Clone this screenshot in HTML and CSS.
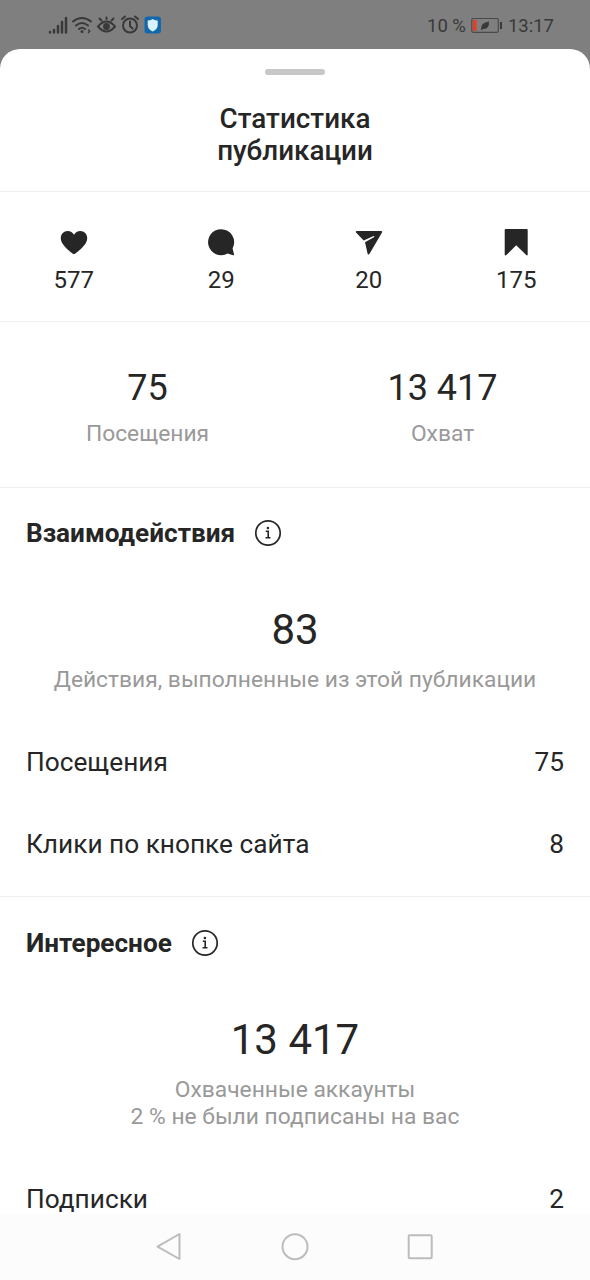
FILE: index.html
```html
<!DOCTYPE html>
<html lang="ru">
<head>
<meta charset="utf-8">
<title>Статистика публикации</title>
<link rel="stylesheet" href="styles.css">
</head>
<body>
<div class="screen">
  <header class="status">
    <svg class="status-icons" width="116" height="22" viewBox="0 0 116 22" fill="none" stroke="#393939" stroke-width="2" stroke-linecap="round">
      <path d="M2 18v.5M6 16v2.500M10 12v6.500M14 8v10.500M18 4v14.500" stroke-width="2.500"/>
      <path d="M25 7.500q9-7 18 0M28 11.500q6-5 12 0M31 15q3-2.500 6 0"/>
      <circle cx="34" cy="17.500" r="1.500" fill="#393939" stroke="none"/>
      <path d="M40.500 16l1.200 1-1.200 1.500" stroke-width="1.500"/>
      <path d="M50 12.500q8.500-10 17 0q-8.500 10-17 0zM58.500 5V3.500M53.500 6.500L51.500 4.500M63.500 6.500L65.500 4.500"/>
      <circle cx="58.500" cy="12.500" r="3.400" fill="#393939" stroke="none"/>
      <circle cx="82" cy="11.500" r="7"/>
      <path d="M82 7.500v4.500l2.500 2.500M74 5l3-2.500M90 5l-3-2.500"/>
      <rect x="96.500" y="2.500" width="16.500" height="17" rx="3" fill="#1268ac" stroke="none"/>
      <path d="M104.700 5q2.500 1.500 5 1.500v4.500q0 4-5 6.500q-5-2.500-5-6.500v-4.500q2.500 0 5-1.500z" fill="#d8f1fc" stroke="none"/>
    </svg>
    <div class="status-right">
      <span>10 %</span>
      <svg class="battery" width="32" height="16" viewBox="0 0 32 16">
        <rect x=".8" y=".5" width="26.500" height="13.800" rx="1.500" fill="none" stroke="#4a4a4a" stroke-width="1.200"/>
        <rect x="2" y="2" width="3.500" height="11" fill="#e63d26"/>
        <path d="M10 11.500q-.5-7 8-8q.5 8-6.200 7.500l-1.200 1.200z" fill="#393939"/>
        <path d="M30 4v7" stroke="#393939" stroke-width="2"/>
      </svg>
      <span>13:17</span>
    </div>
  </header>

  <main class="sheet">
    <div class="sheet-head">
      <div class="handle"></div>
      <h1>Статистика<br>публикации</h1>
    </div>

    <section class="reactions">
      <div class="reaction">
        <svg width="28" height="28" viewBox="0 0 28 28" fill="#262626"><path d="M14 26.200C12.500 25.500 .8 17.500 .8 10.200C.8 6 3.800 3.100 7.600 3.100C10.600 3.100 12.700 4.700 14 6.700C15.300 4.700 17.400 3.100 20.400 3.100C24.200 3.100 27.200 6 27.200 10.200C27.200 17.500 15.500 25.500 14 26.200z"/></svg>
        <span>577</span>
      </div>
      <div class="reaction">
        <svg width="28" height="28" viewBox="0 0 28 28" fill="#262626"><path d="M14 1.200A13 13 0 1 0 20.500 25.500L26.200 27.300Q27.300 27.400 27 26.300L25.600 20.400A13 13 0 0 0 14 1.200z"/></svg>
        <span>29</span>
      </div>
      <div class="reaction">
        <svg width="28" height="28" viewBox="0 0 28 28" fill="#262626"><path d="M1.500 3H26.200Q27.800 3.200 27 4.600L14.400 25.900Q13.300 27.200 12.600 25.700L10 14.300L19.300 8.900Q19.500 8.100 18.600 8.100L8.700 12.600L1 4.600Q.3 3.500 1.500 3z"/></svg>
        <span>20</span>
      </div>
      <div class="reaction">
        <svg width="28" height="28" viewBox="0 0 28 28" fill="#262626"><path d="M3.700 1H24.700Q25.700 1 25.700 2V26.400Q25.500 28 24.200 27L14.200 17.300L4.400 27Q2.800 28 2.700 26.400V2Q2.700 1 3.700 1z"/></svg>
        <span>175</span>
      </div>
    </section>

    <section class="summary">
      <div><div class="summary-value">75</div><div class="caption">Посещения</div></div>
      <div><div class="summary-value">13 417</div><div class="caption">Охват</div></div>
    </section>

    <section class="block interactions">
      <div class="block-title">
        <h2>Взаимодействия</h2>
        <svg width="28" height="28" viewBox="0 0 28 28" fill="none" stroke="#262626"><circle cx="14" cy="14" r="12.200" stroke-width="1.700"/><path d="M11.800 12.200h2.400v6.300M11.500 18.700h5" stroke-width="1.600"/><circle cx="13.900" cy="9" r="1.300" fill="#262626" stroke="none"/></svg>
      </div>
      <div class="big">83</div>
      <div class="caption">Действия, выполненные из этой публикации</div>
      <div class="rows">
        <div class="row"><span>Посещения</span><span>75</span></div>
        <div class="row"><span>Клики по кнопке сайта</span><span>8</span></div>
      </div>
    </section>

    <section class="block discovery">
      <div class="block-title">
        <h2>Интересное</h2>
        <svg width="28" height="28" viewBox="0 0 28 28" fill="none" stroke="#262626"><circle cx="14" cy="14" r="12.200" stroke-width="1.700"/><path d="M11.800 12.200h2.400v6.300M11.500 18.700h5" stroke-width="1.600"/><circle cx="13.900" cy="9" r="1.300" fill="#262626" stroke="none"/></svg>
      </div>
      <div class="big">13 417</div>
      <div class="caption">Охваченные аккаунты<br>2 % не были подписаны на вас</div>
      <div class="rows">
        <div class="row"><span>Подписки</span><span>2</span></div>
      </div>
    </section>
  </main>

  <nav class="navbar">
    <svg width="28" height="32" viewBox="0 0 28 32" fill="none" stroke="#bcbcbc" stroke-width="2" stroke-linejoin="round"><path d="M24.500 3V28L2.500 15.700z"/></svg>
    <svg width="28" height="32" viewBox="0 0 28 32" fill="none" stroke="#bcbcbc" stroke-width="2"><circle cx="14" cy="15.700" r="12.500"/></svg>
    <svg width="28" height="32" viewBox="0 0 28 32" fill="none" stroke="#bcbcbc" stroke-width="2"><rect x="1.700" y="4.200" width="23" height="23" rx="1"/></svg>
  </nav>
</div>
</body>
</html>
```
FILE: styles.css
```css
* { box-sizing: border-box; }
body { margin: 0; }
h1, h2 { margin: 0; }
svg { display: block; flex: none; }

.screen {
  width: 590px;
  height: 1280px;
  display: flex;
  flex-direction: column;
  overflow: hidden;
  background: #7f7f7f;
  color: #262626;
  font-family: Roboto, "Noto Sans", sans-serif;
  white-space: nowrap;
}

.status {
  flex: none;
  height: 49px;
  display: flex;
  justify-content: space-between;
  padding: 14px 36px 0 48px;
  color: #393939;
}
.status-right {
  display: flex;
  height: 24px;
  align-items: center;
  gap: 5px;
  font-size: 18.5px;
  line-height: 24px;
}

.sheet {
  flex: none;
  height: 1165px;
  overflow: hidden;
  background: #fff;
  border-radius: 20px 20px 0 0;
}
.sheet-head {
  height: 143px;
  padding-top: 20px;
  border-bottom: 1px solid #efefef;
}
.handle {
  width: 60px;
  height: 6px;
  margin: 0 auto;
  border-radius: 3px;
  background: #c7c7c7;
}
h1 {
  margin-top: 28px;
  font-size: 27.8px;
  font-weight: 500;
  line-height: 32px;
  text-align: center;
}

.reactions {
  height: 130px;
  display: grid;
  grid-template-columns: repeat(4, 1fr);
  padding-top: 36px;
  border-bottom: 1px solid #efefef;
}
.reaction {
  display: flex;
  flex-direction: column;
  align-items: center;
  gap: 9px;
  font-size: 24px;
  line-height: 30px;
}

.summary {
  height: 166px;
  display: grid;
  grid-template-columns: 1fr 1fr;
  padding-top: 44px;
  border-bottom: 1px solid #efefef;
  text-align: center;
}
.summary-value {
  margin-bottom: 10px;
  font-size: 36px;
  line-height: 44px;
}
.caption {
  color: #999;
  font-size: 22.8px;
  line-height: 27px;
  text-align: center;
}

.block { padding: 30px 26px 0; }
.interactions {
  height: 409px;
  border-bottom: 1px solid #efefef;
}
.block-title {
  display: flex;
  align-items: center;
  gap: 19px;
  height: 30px;
}
.discovery .block-title { height: 31px; }
h2 {
  font-size: 26.15px;
  font-weight: 700;
  line-height: 30px;
}
.big {
  margin: 57px 0 11px;
  font-size: 42px;
  line-height: 50px;
  text-align: center;
}
.rows {
  display: grid;
  gap: 50px;
  margin-top: 53px;
}
.row {
  display: flex;
  justify-content: space-between;
  font-size: 26.25px;
  line-height: 32px;
}

.navbar {
  flex: 1;
  display: flex;
  justify-content: center;
  align-items: center;
  gap: 98px;
  background: #fcfcfc;
}
```
